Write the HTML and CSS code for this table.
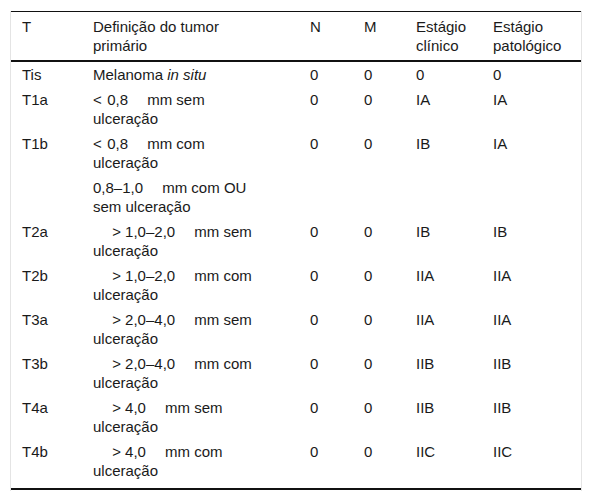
FILE: index.html
```html
<!DOCTYPE html>
<html lang="pt">
<head>
<meta charset="utf-8">
<link rel="stylesheet" href="styles.css">
</head>
<body>
<div class="frame">
<table class="stage">
<colgroup>
<col class="c1"><col class="c2"><col class="c3"><col class="c4"><col class="c5"><col class="c6">
</colgroup>
<thead>
<tr><th>T</th><th class="def">Definição do tumor primário</th><th>N</th><th>M</th><th>Estágio clínico</th><th>Estágio patológico</th></tr>
</thead>
<tbody>
<tr><td>Tis</td><td class="def">Melanoma <i>in situ</i></td><td>0</td><td>0</td><td>0</td><td>0</td></tr>
<tr><td>T1a</td><td class="def">&lt;&nbsp;&#8202;0,8&emsp; mm sem ulceração</td><td>0</td><td>0</td><td>IA</td><td>IA</td></tr>
<tr><td>T1b</td><td class="def">&lt;&nbsp;&#8202;0,8&emsp; mm com ulceração</td><td>0</td><td>0</td><td>IB</td><td>IA</td></tr>
<tr><td></td><td class="def">0,8–1,0&emsp; mm com OU sem ulceração</td><td></td><td></td><td></td><td></td></tr>
<tr><td>T2a</td><td class="def">&emsp;&nbsp;&gt; 1,0–2,0&emsp; mm sem ulceração</td><td>0</td><td>0</td><td>IB</td><td>IB</td></tr>
<tr><td>T2b</td><td class="def">&emsp;&nbsp;&gt; 1,0–2,0&emsp; mm com ulceração</td><td>0</td><td>0</td><td>IIA</td><td>IIA</td></tr>
<tr><td>T3a</td><td class="def">&emsp;&nbsp;&gt; 2,0–4,0&emsp; mm sem ulceração</td><td>0</td><td>0</td><td>IIA</td><td>IIA</td></tr>
<tr><td>T3b</td><td class="def">&emsp;&nbsp;&gt; 2,0–4,0&emsp; mm com ulceração</td><td>0</td><td>0</td><td>IIB</td><td>IIB</td></tr>
<tr><td>T4a</td><td class="def">&emsp;&nbsp;&gt; 4,0&emsp; mm sem ulceração</td><td>0</td><td>0</td><td>IIB</td><td>IIB</td></tr>
<tr class="last"><td>T4b</td><td class="def">&emsp;&nbsp;&gt; 4,0&emsp; mm com ulceração</td><td>0</td><td>0</td><td>IIC</td><td>IIC</td></tr>
</tbody>
</table>
</div>
</body>
</html>
```
FILE: styles.css
```css
html, body {
  margin: 0;
  padding: 0;
  background: #fff;
}
body {
  font-family: "Liberation Sans", Arial, sans-serif;
  font-size: 15px;
  color: #1a1a1a;
}
.frame {
  margin: 11px 0 0 10px;
  width: 570px;
  border-left: 1px solid #e4e4e4;
  border-right: 1px solid #e4e4e4;
  padding-bottom: 1px;
}
.stage {
  width: 570px;
  table-layout: fixed;
  border-collapse: collapse;
  border-top: 1px solid #111;
  border-bottom: 2px solid #111;
}
.c1 { width: 71px; }
.c2 { width: 217px; }
.c3 { width: 54px; }
.c4 { width: 52px; }
.c5 { width: 77px; }
.c6 { width: 99px; }
th, td {
  text-align: left;
  vertical-align: top;
  font-weight: normal;
  line-height: 19px;
  padding: 3px 4px 3px 11px;
}
thead th {
  padding-top: 5px;
  padding-bottom: 5px;
  border-bottom: 2px solid #111;
}
th.def, td.def {
  padding-right: 28px;
}
tr.last td {
  padding-bottom: 8px;
}
```
